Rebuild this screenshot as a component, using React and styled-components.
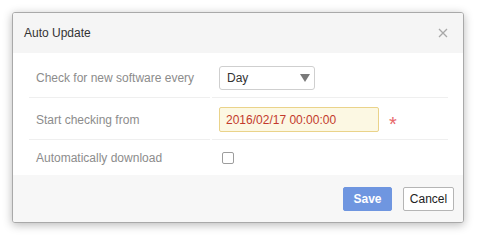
import React from 'react'
import styled, { createGlobalStyle } from 'styled-components'

const GlobalStyle = createGlobalStyle`
  html, body {
    margin: 0;
    padding: 0;
    background: #ffffff;
  }
  body {
    font-family: "Liberation Sans", Arial, sans-serif;
    font-size: 12px;
  }
`

const Page = styled.div`
  padding: 12px;
`

const Dialog = styled.div`
  width: 450px;
  border: 1px solid #a9a9a9;
  border-radius: 3px;
  background: #fff;
  box-shadow: 0 2px 10px rgba(0, 0, 0, 0.28);
  overflow: hidden;
`

const Header = styled.div`
  height: 40px;
  display: flex;
  align-items: center;
  justify-content: space-between;
  padding: 0 14px 0 11px;
  background: #f5f5f5;
  color: #333;
  font-size: 12px;
`

const CloseButton = styled.button`
  border: 0;
  background: none;
  padding: 0;
  width: 12px;
  height: 12px;
  display: flex;
  align-items: center;
  justify-content: center;
  cursor: pointer;
`

const Body = styled.div`
  padding: 8px 15px 0 16px;
`

const Row = styled.div`
  display: grid;
  grid-template-columns: 181px 236px;
  column-gap: 2px;
  height: ${(p) => p.height}px;
`

const Cell = styled.div`
  display: flex;
  align-items: center;
  padding: ${(p) => p.pad || '0'};
  padding-left: 7px;
  border-bottom: ${(p) => (p.last ? '0' : '1px solid #efefef')};
`

const Label = styled(Cell)`
  color: #8c8c8c;
`

const Select = styled.div`
  position: relative;
  width: 87px;
  height: 22px;
  border: 1px solid #cfcfcf;
  border-radius: 3px;
  background: #fff;
  color: #333;
  display: flex;
  align-items: center;
  padding-left: 7px;
`

const Arrow = styled.span`
  position: absolute;
  right: 4px;
  top: 7px;
  width: 0;
  height: 0;
  border-left: 5px solid transparent;
  border-right: 5px solid transparent;
  border-top: 8px solid #7a7a7a;
`

const DateInput = styled.input`
  width: 160px;
  height: 25px;
  box-sizing: border-box;
  border: 1px solid #ead38a;
  border-radius: 2px;
  background: #fcf8e3;
  color: #c33a2c;
  font-family: inherit;
  font-size: 12px;
  padding: 0 0 0 6px;
  outline: none;
`

const Required = styled.span`
  color: #e8676a;
  font-size: 20px;
  line-height: 1;
  margin-left: 10px;
  margin-top: 8px;
`

const Checkbox = styled.input`
  appearance: none;
  margin: 0 0 0 3px;
  width: 12px;
  height: 12px;
  border: 1px solid #9d9d9d;
  border-radius: 2px;
  background: #fff;
`

const Footer = styled.div`
  height: 47px;
  display: flex;
  align-items: center;
  justify-content: flex-end;
  gap: 11px;
  padding: 0 9px 0 0;
  background: #f7f7f7;
`

const Button = styled.button`
  height: 24px;
  width: ${(p) => p.w}px;
  border-radius: 2px;
  font-family: inherit;
  font-size: 12px;
  cursor: pointer;
  padding: 0;
  border: 1px solid ${(p) => (p.primary ? '#6f96e0' : '#b5b5b5')};
  background: ${(p) => (p.primary ? '#6f96e0' : '#fff')};
  color: ${(p) => (p.primary ? '#fff' : '#222')};
  font-weight: ${(p) => (p.primary ? 'bold' : 'normal')};
`

export default function App() {
  return (
    <Page>
      <GlobalStyle />
      <Dialog>
        <Header>
          <span>Auto Update</span>
          <CloseButton aria-label="close">
            <svg width="10" height="10" viewBox="0 0 10 10">
              <path d="M1 1 L9 9 M9 1 L1 9" stroke="#a8a8a8" strokeWidth="1.3" />
            </svg>
          </CloseButton>
        </Header>
        <Body>
          <Row height={37}>
            <Label pad="0 0 3px 0">Check for new software every</Label>
            <Cell pad="0 0 3px 0">
              <Select>
                Day
                <Arrow />
              </Select>
            </Cell>
          </Row>
          <Row height={42}>
            <Label pad="2px 0 0 0">Start checking from</Label>
            <Cell pad="2px 0 0 0">
              <DateInput defaultValue="2016/02/17 00:00:00" />
              <Required>*</Required>
            </Cell>
          </Row>
          <Row height={35}>
            <Label last>Automatically download</Label>
            <Cell last>
              <Checkbox type="checkbox" />
            </Cell>
          </Row>
        </Body>
        <Footer>
          <Button primary w={49}>Save</Button>
          <Button w={51}>Cancel</Button>
        </Footer>
      </Dialog>
    </Page>
  )
}
